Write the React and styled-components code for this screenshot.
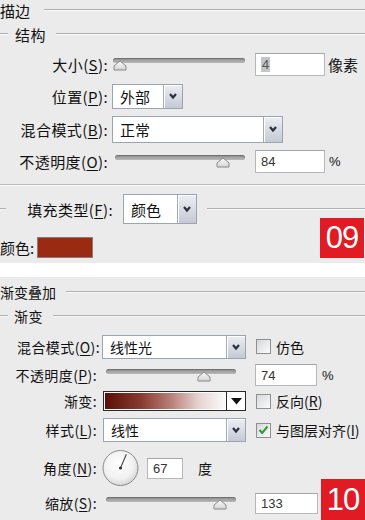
import React from 'react';
import styled, { createGlobalStyle } from 'styled-components';

const GlobalStyle = createGlobalStyle`
  html, body {
    margin: 0;
    padding: 0;
    background: #fff;
  }
  body {
    font-family: "Noto Sans CJK SC", "Liberation Sans", sans-serif;
    color: #111;
  }
`;

const Page = styled.div`
  width: 365px;
  height: 520px;
  display: flex;
  flex-direction: column;
  overflow: hidden;
`;

const Panel = styled.section`
  position: relative;
  background: #ebebeb;
  height: ${p => p.$h}px;
  font-size: ${p => p.$fs}px;
  display: flex;
  flex-direction: column;
  flex-shrink: 0;
`;

const WhiteGap = styled.div`
  height: 14px;
  background: #fff;
  flex-shrink: 0;
`;

const Row = styled.div`
  display: flex;
  align-items: center;
  height: ${p => p.$h}px;
  flex-shrink: 0;
  white-space: nowrap;
  line-height: 1;
`;

const Rule = styled.div`
  flex: 1;
  margin-left: ${p => p.$ml || 0}px;
  border-top: 1px solid #b1b1b1;
  border-bottom: 1px solid #f8f8f8;
`;

const LeadRule = styled.div`
  width: ${p => p.$w}px;
  flex-shrink: 0;
  border-top: 1px solid #b1b1b1;
  border-bottom: 1px solid #f8f8f8;
`;

const Divider = styled.div`
  margin-top: ${p => p.$mt}px;
  border-top: 1px solid #bdbdbd;
  border-bottom: 1px solid #f9f9f9;
  flex-shrink: 0;
`;

const Label = styled.span`
  width: ${p => (p.$w ? `${p.$w}px` : 'auto')};
  margin-left: ${p => p.$ml || 0}px;
  text-align: right;
  flex-shrink: 0;
  letter-spacing: 0.4px;
`;

const Key = styled.u`
  text-underline-offset: 2px;
`;

const Select = styled.div`
  display: flex;
  align-items: stretch;
  width: ${p => p.$w}px;
  height: ${p => p.$h}px;
  margin-left: ${p => p.$ml}px;
  background: #fff;
  border: 1px solid #9aa5b4;
  box-sizing: border-box;
  flex-shrink: 0;
`;

const SelectText = styled.span`
  flex: 1;
  display: flex;
  align-items: center;
  padding-left: 7px;
`;

const SelectButton = styled.span`
  width: 18px;
  display: flex;
  align-items: center;
  justify-content: center;
  background: linear-gradient(#eceef3, #c4c9d4);
  border-left: 1px solid #a3abb9;
  box-shadow: inset 1px 1px 0 #fff;
`;

const Slider = styled.div`
  position: relative;
  width: ${p => p.$w}px;
  height: 14px;
  margin-left: ${p => p.$ml}px;
  flex-shrink: 0;
`;

const Track = styled.div`
  margin-top: 1px;
  height: 5px;
  border-radius: 3px;
  background: linear-gradient(#8e8e8e, #b9b9b9);
  box-shadow: inset 0 1px 1px rgba(0, 0, 0, 0.25);
`;

const ThumbMark = styled.svg`
  position: absolute;
  top: 3px;
  margin-left: -7px;
`;

const TextInput = styled.div`
  width: ${p => p.$w}px;
  height: ${p => p.$h}px;
  margin-left: ${p => p.$ml}px;
  box-sizing: border-box;
  background: #fff;
  border: 1px solid #b4b7bd;
  border-top-color: #a2a6ad;
  display: flex;
  align-items: center;
  padding-left: 5px;
  font-family: "Liberation Sans", Arial, sans-serif;
  font-size: 13px;
  color: #333;
  flex-shrink: 0;
`;

const Selected = styled.span`
  background: #c3c5cb;
  color: #555;
  padding: 1px 1px;
`;

const Unit = styled.span`
  margin-left: ${p => p.$ml}px;
  font-family: ${p => (p.$latin ? '"Liberation Sans", Arial, sans-serif' : 'inherit')};
  font-size: ${p => (p.$latin ? '13px' : 'inherit')};
`;

const Swatch = styled.div`
  width: 56px;
  height: 21px;
  margin-left: 3px;
  background: #9b2a12;
  border: 1px solid #8d7b77;
  box-sizing: border-box;
`;

const GradientBox = styled.div`
  display: flex;
  width: 143px;
  height: 20px;
  margin-left: 6px;
  border: 1px solid #2a2a2a;
  box-sizing: border-box;
  flex-shrink: 0;
`;

const GradientFill = styled.div`
  flex: 1;
  background: linear-gradient(to right, #5b0f08 0%, #8a3a30 30%, #b98078 55%, #e6d3d1 78%, #fcf9f9 100%);
  border: 1px solid #fff;
`;

const GradientButton = styled.span`
  width: 18px;
  display: flex;
  align-items: center;
  justify-content: center;
  background: #fff;
  border-left: 1px solid #2a2a2a;
`;

const CheckBox = styled.span`
  width: 15px;
  height: 15px;
  margin-left: 10px;
  box-sizing: border-box;
  border: 1px solid #8e8f8f;
  background: linear-gradient(135deg, #d6d8dc, #fbfbfb);
  display: flex;
  align-items: center;
  justify-content: center;
  flex-shrink: 0;
`;

const CheckText = styled.span`
  margin-left: 5px;
`;

const DialWrap = styled.div`
  margin-left: 5px;
  width: 37px;
  height: 38px;
  flex-shrink: 0;
`;

const Badge = styled.div`
  position: absolute;
  right: ${p => p.$r}px;
  top: ${p => p.$t}px;
  width: 44px;
  height: ${p => p.$h}px;
  background: #e11b23;
  color: #fff;
  font-family: "Liberation Sans", Arial, sans-serif;
  font-size: 31px;
  letter-spacing: -1px;
  display: flex;
  align-items: center;
  justify-content: center;
`;

const Chevron = () => (
  <svg width="10" height="8" viewBox="0 0 10 8">
    <polyline points="2,2 5,5.5 8,2" fill="none" stroke="#2b3040" strokeWidth="2.2" />
  </svg>
);

const Thumb = ({ at }) => (
  <ThumbMark width="14" height="11" viewBox="0 0 14 11" style={{ left: `${at}%` }}>
    <defs>
      <linearGradient id="thumbfill" x1="0" y1="0" x2="0" y2="1">
        <stop offset="0" stopColor="#fdfdfd" />
        <stop offset="1" stopColor="#d4d4d4" />
      </linearGradient>
    </defs>
    <polygon points="1,10 1,6 7,1 13,6 13,10" fill="url(#thumbfill)" stroke="#8a8a8a" strokeWidth="1" />
  </ThumbMark>
);

const SliderBar = ({ w, ml, at }) => (
  <Slider $w={w} $ml={ml}>
    <Track />
    <Thumb at={at} />
  </Slider>
);

const Dropdown = ({ w, h, ml, children }) => (
  <Select $w={w} $h={h} $ml={ml}>
    <SelectText>{children}</SelectText>
    <SelectButton>
      <Chevron />
    </SelectButton>
  </Select>
);

const Check = ({ checked }) => (
  <CheckBox>
    {checked && (
      <svg width="11" height="10" viewBox="0 0 11 10">
        <polyline points="1.5,5 4.2,8 9.5,1.5" fill="none" stroke="#2f9a34" strokeWidth="2" />
      </svg>
    )}
  </CheckBox>
);

const Dial = ({ angle }) => {
  const r = (angle * Math.PI) / 180;
  const x = 18.5 + Math.cos(r) * 15;
  const y = 19 - Math.sin(r) * 15;
  return (
    <DialWrap>
      <svg width="37" height="38" viewBox="0 0 37 38">
        <defs>
          <radialGradient id="dialfill" cx="0.45" cy="0.4" r="0.6">
            <stop offset="0" stopColor="#ffffff" />
            <stop offset="0.7" stopColor="#f1f1f1" />
            <stop offset="1" stopColor="#d6d6d6" />
          </radialGradient>
        </defs>
        <circle cx="18.5" cy="19" r="17.5" fill="url(#dialfill)" stroke="#8c8c8c" strokeWidth="1" />
        <line x1="18.5" y1="19" x2={x} y2={y} stroke="#555" strokeWidth="1.2" />
        <circle cx="18.5" cy="19" r="1.6" fill="#333" />
      </svg>
    </DialWrap>
  );
};

export default function App() {
  return (
    <Page>
      <GlobalStyle />
      <Panel $h={263} $fs={15}>
        <Row $h={20}>
          <span>描边</span>
          <Rule $ml={14} />
        </Row>
        <Row $h={28}>
          <LeadRule $w={8} />
          <Label $ml={7}>结构</Label>
          <Rule $ml={10} />
        </Row>
        <Row $h={32}>
          <Label $w={108}>大小(<Key>S</Key>):</Label>
          <SliderBar w={132} ml={5} at={5} />
          <TextInput $w={70} $h={23} $ml={10}>
            <Selected>4</Selected>
          </TextInput>
          <Unit $ml={3}>像素</Unit>
        </Row>
        <Row $h={32}>
          <Label $w={108}>位置(<Key>P</Key>):</Label>
          <Dropdown w={71} h={25} ml={4}>外部</Dropdown>
        </Row>
        <Row $h={34}>
          <Label $w={108}>混合模式(<Key>B</Key>):</Label>
          <Dropdown w={171} h={27} ml={4}>正常</Dropdown>
        </Row>
        <Row $h={30}>
          <Label $w={108}>不透明度(<Key>O</Key>):</Label>
          <SliderBar w={130} ml={7} at={83} />
          <TextInput $w={70} $h={23} $ml={10}>84</TextInput>
          <Unit $ml={4} $latin>%</Unit>
        </Row>
        <Divider $mt={8} />
        <Row $h={46}>
          <LeadRule $w={6} />
          <Label $w={107}>填充类型(<Key>F</Key>):</Label>
          <Dropdown w={74} h={30} ml={10}>颜色</Dropdown>
          <Rule $ml={10} />
        </Row>
        <Row $h={31}>
          <span>颜色:</span>
          <Swatch />
        </Row>
        <Badge $r={1} $t={218} $h={40}>09</Badge>
      </Panel>
      <WhiteGap />
      <Panel $h={243} $fs={14}>
        <Row $h={30}>
          <span>渐变叠加</span>
          <Rule $ml={10} />
        </Row>
        <Row $h={18}>
          <LeadRule $w={8} />
          <Label $ml={6}>渐变</Label>
          <Rule $ml={10} />
        </Row>
        <Row $h={8} />
        <Row $h={27}>
          <Label $w={100}>混合模式(<Key>O</Key>):</Label>
          <Dropdown w={144} h={24} ml={2}>线性光</Dropdown>
          <Check />
          <CheckText>仿色</CheckText>
        </Row>
        <Row $h={30}>
          <Label $w={97}>不透明度(<Key>P</Key>):</Label>
          <SliderBar w={130} ml={9} at={75} />
          <TextInput $w={62} $h={22} $ml={19}>74</TextInput>
          <Unit $ml={5} $latin>%</Unit>
        </Row>
        <Row $h={22}>
          <Label $w={97}>渐变:</Label>
          <GradientBox>
            <GradientFill />
            <GradientButton>
              <svg width="11" height="7" viewBox="0 0 11 7">
                <polygon points="0,0 11,0 5.5,6.5" fill="#111" />
              </svg>
            </GradientButton>
          </GradientBox>
          <Check />
          <CheckText>反向(<Key>R</Key>)</CheckText>
        </Row>
        <Row $h={36}>
          <Label $w={97}>样式(<Key>L</Key>):</Label>
          <Dropdown w={143} h={24} ml={6}>线性</Dropdown>
          <Check checked />
          <CheckText>与图层对齐(<Key>I</Key>)</CheckText>
        </Row>
        <Row $h={40}>
          <Label $w={97}>角度(<Key>N</Key>):</Label>
          <Dial angle={67} />
          <TextInput $w={36} $h={21} $ml={8}>67</TextInput>
          <Unit $ml={15}>度</Unit>
        </Row>
        <Row $h={30}>
          <Label $w={97}>缩放(<Key>S</Key>):</Label>
          <SliderBar w={130} ml={9} at={88} />
          <TextInput $w={63} $h={21} $ml={19}>133</TextInput>
        </Row>
        <Badge $r={0} $t={202} $h={41}>10</Badge>
      </Panel>
    </Page>
  );
}
